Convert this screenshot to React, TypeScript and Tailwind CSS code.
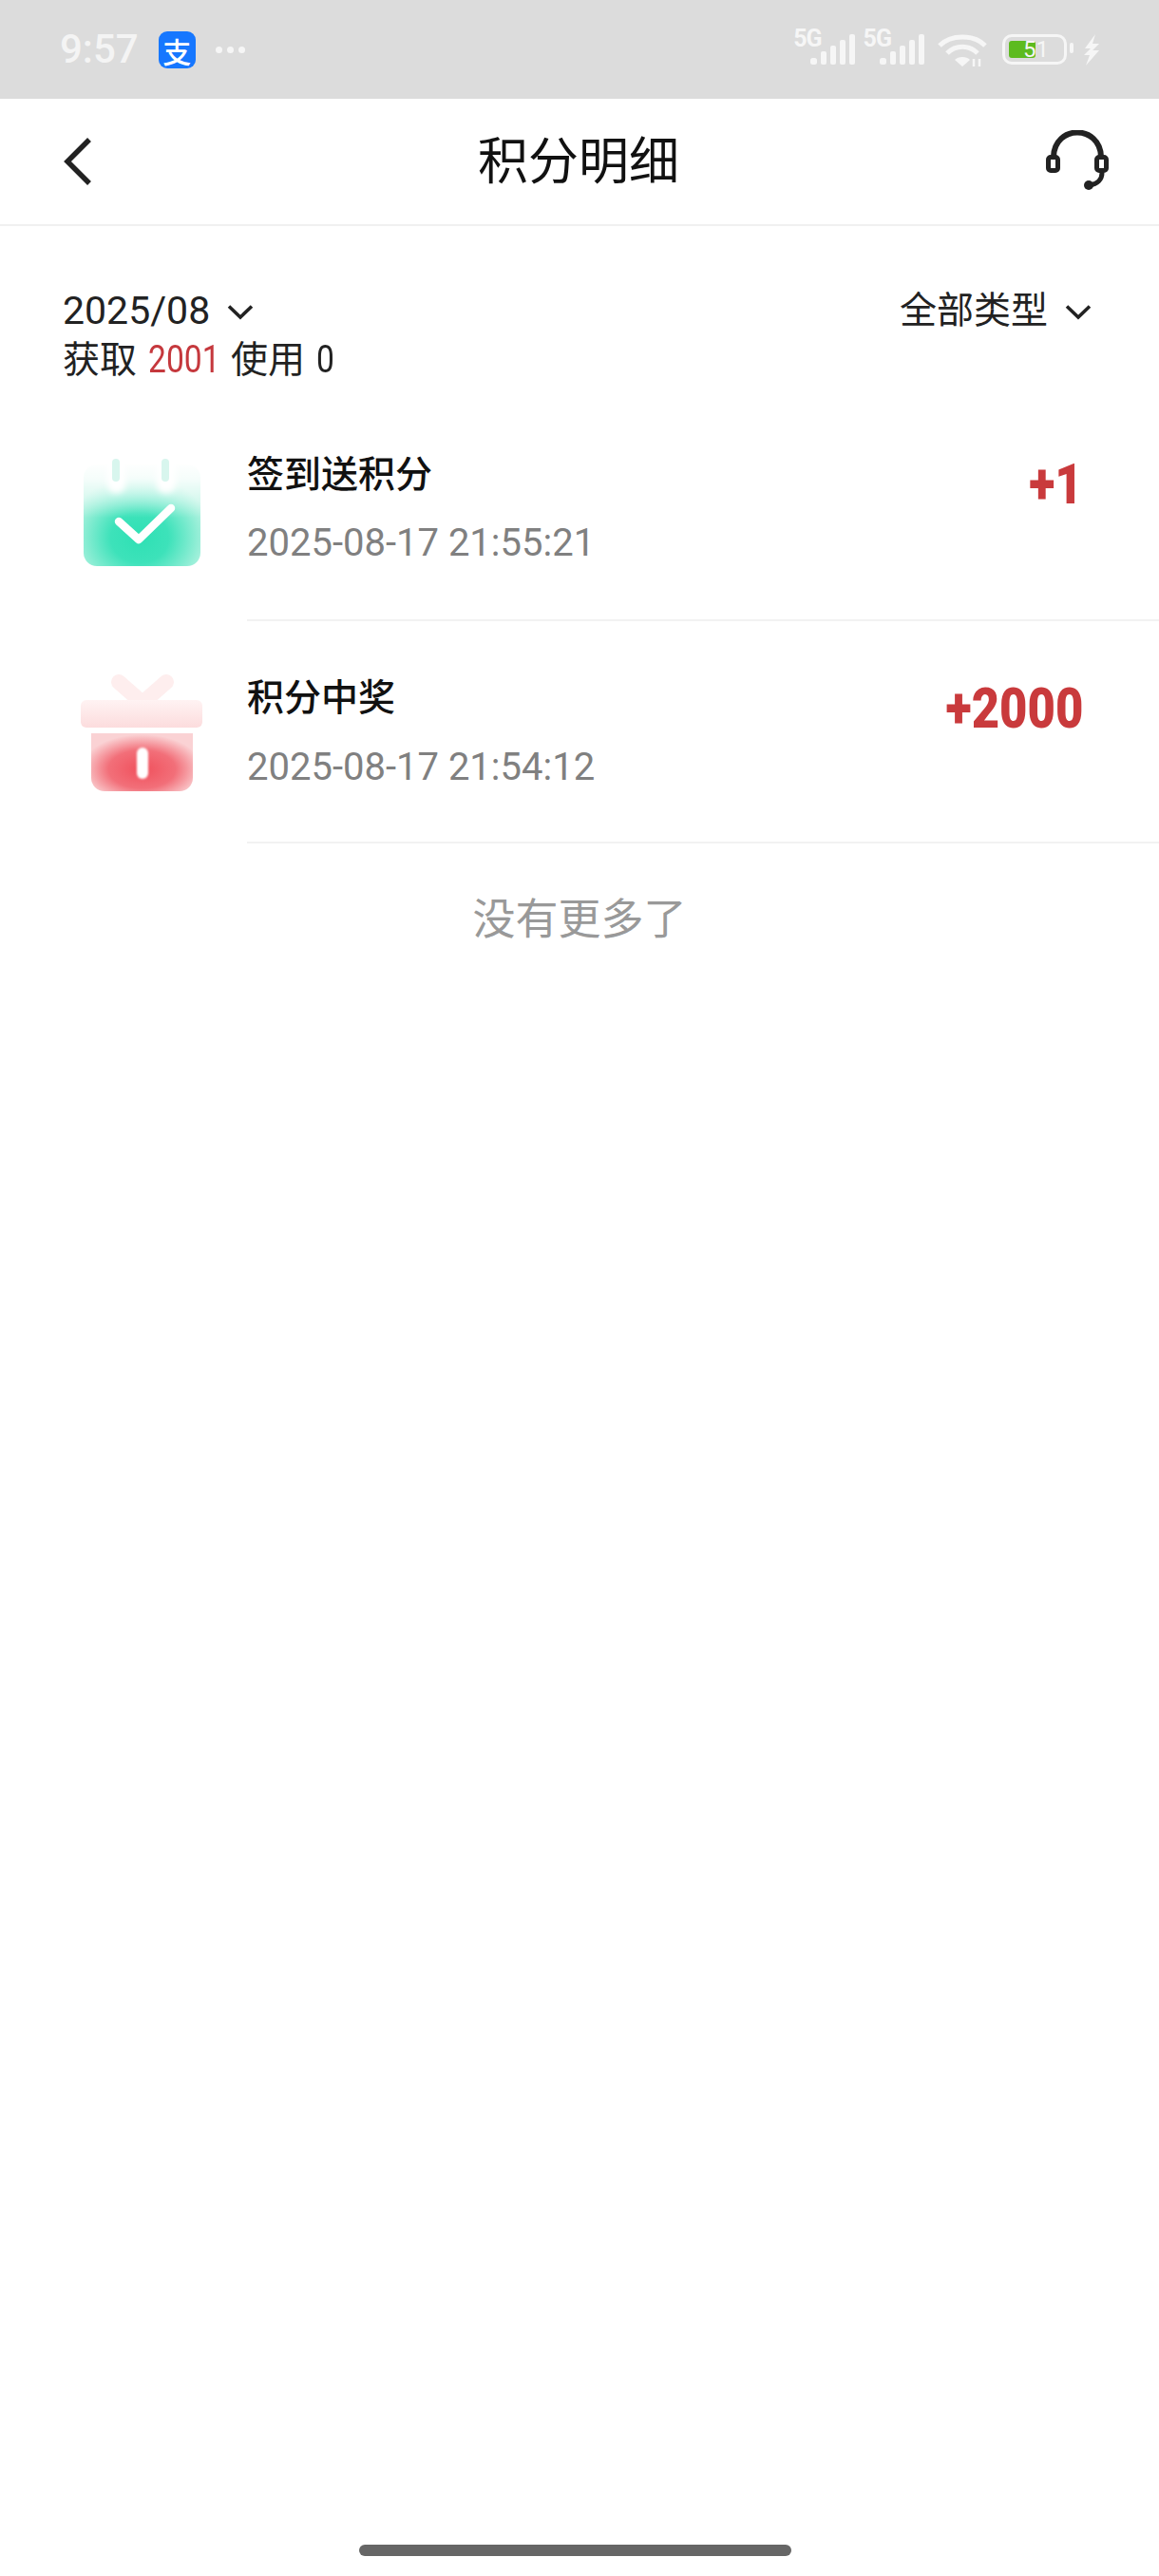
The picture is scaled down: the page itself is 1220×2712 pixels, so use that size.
const FONT = "font-['Roboto','Noto_Sans_CJK_SC',sans-serif]";

function Chevron() {
  return (
    <svg width="28" height="17" viewBox="0 0 28 17" fill="none" className="shrink-0">
      <path d="M2 2.5 14 14 26 2.5" stroke="#222" strokeWidth="3.6" />
    </svg>
  );
}

function Signal() {
  return (
    <div className="flex items-start">
      <span className="text-[25px] leading-[20px] font-bold text-[#f6f6f6] tracking-[-1px] mt-[-2px]">5G</span>
      <svg width="48" height="32" viewBox="0 0 48 32" className="ml-[-12px] mt-[3px]" fill="#f6f6f6">
        <rect x="0" y="25" width="7" height="7" rx="2.5" />
        <rect x="11" y="18" width="6" height="14" rx="2" />
        <rect x="21" y="12" width="6" height="20" rx="2" />
        <rect x="31" y="6" width="6" height="26" rx="2" />
        <rect x="41" y="0" width="6" height="32" rx="2" />
      </svg>
    </div>
  );
}

function StatusBar() {
  return (
    <div className="h-[104px] bg-[#dcdcdc] flex items-start pt-[33px] pl-[63px] pr-[62px]">
      <span className="text-[42px] leading-[38px] font-medium text-[#f4f4f4]">9:57</span>
      <div className="ml-[21px] w-[39px] h-[39px] rounded-[9px] bg-[#1677ff] flex items-center justify-center text-white text-[30px] leading-none font-medium font-['Noto_Sans_CJK_SC',sans-serif]">
        支
      </div>
      <div className="ml-[21px] mt-[16px] flex gap-[5px]">
        <span className="w-[7px] h-[7px] rounded-full bg-[#f6f6f6]" />
        <span className="w-[7px] h-[7px] rounded-full bg-[#f6f6f6]" />
        <span className="w-[7px] h-[7px] rounded-full bg-[#f6f6f6]" />
      </div>

      <div className="ml-auto flex items-start">
        <Signal />
        <div className="ml-[8px]">
          <Signal />
        </div>
        <svg width="52" height="36" viewBox="0 0 52 36" fill="none" className="ml-[13px] mt-[2px]">
          <path d="M2 13C14 1 38 1 50 13" stroke="#f6f6f6" strokeWidth="5" />
          <path d="M10 21C19 12 33 12 42 21" stroke="#f6f6f6" strokeWidth="5" />
          <path d="M18 28C22 24 30 24 34 28L26 35Z" fill="#f6f6f6" />
          <path d="M38 27v8M44 27v8" stroke="#f6f6f6" strokeWidth="2.5" />
        </svg>
        <div className="relative ml-[16px] mt-[3px] w-[68px] h-[32px] rounded-[10px] border-[3px] border-[#f6f6f6] p-[4px]">
          <div className="w-[28px] h-full rounded-[3px] bg-[#5dbb1f]" />
          <span className="absolute left-[19px] top-[1px] text-[24px] leading-[24px] text-[#f6f6f6]">51</span>
        </div>
        <div className="ml-[3px] mt-[12px] w-[4px] h-[11px] rounded-[2px] bg-[#f6f6f6]" />
        <svg width="18" height="33" viewBox="0 0 18 33" className="ml-[10px] mt-[3px]" fill="#f6f6f6">
          <path d="M13 0 2 15 8 15 1 22 7 22 3 33 17 17 10 17 17 10 10 10Z" />
        </svg>
      </div>
    </div>
  );
}

function NavBar() {
  return (
    <div className="relative h-[134px] border-b-2 border-[#f0f0f0] flex items-center justify-between pl-[66px] pr-[52px]">
      <svg width="30" height="52" viewBox="0 0 30 52" fill="none">
        <path d="M28 3 5 26 28 49" stroke="#222" strokeWidth="5.5" />
      </svg>
      <span className="absolute left-0 right-[2px] mt-[2px] text-center text-[53px] leading-[60px] text-[#111]">积分明细</span>
      <svg width="68" height="64" viewBox="0 0 68 64" fill="none" className="mt-[-3px]">
        <path d="M9 28C10 -6 58 -6 59 28" stroke="#222" strokeWidth="6" />
        <rect x="3.5" y="28.5" width="10" height="14" rx="2.5" stroke="#222" strokeWidth="5" fill="#fff" />
        <rect x="54.5" y="28.5" width="10" height="14" rx="2.5" stroke="#222" strokeWidth="5" fill="#fff" />
        <path d="M60 45C60 52 55 57 47 58" stroke="#222" strokeWidth="5" />
        <circle cx="46" cy="58" r="5" fill="#222" />
      </svg>
    </div>
  );
}

function CalendarIcon() {
  return (
    <svg width="130" height="116" viewBox="0 0 130 116" className="shrink-0">
      <defs>
        <radialGradient id="cal" cx="48%" cy="72%" r="62%">
          <stop offset="0%" stopColor="#2ee0b4" />
          <stop offset="40%" stopColor="#3de2ba" />
          <stop offset="100%" stopColor="#bdf4e4" />
        </radialGradient>
        <linearGradient id="calFade" x1="0" y1="0" x2="0" y2="1">
          <stop offset="0%" stopColor="#fff" stopOpacity="1" />
          <stop offset="30%" stopColor="#fff" stopOpacity="0.85" />
          <stop offset="100%" stopColor="#fff" stopOpacity="0" />
        </linearGradient>
        <filter id="soft" x="-40%" y="-40%" width="180%" height="180%">
          <feGaussianBlur stdDeviation="3" />
        </filter>
      </defs>
      <rect x="3" y="8" width="123" height="107" rx="14" fill="url(#cal)" />
      <rect x="2" y="6" width="125" height="58" fill="url(#calFade)" />
      <rect x="28" y="-6" width="19" height="44" rx="9" fill="#fff" filter="url(#soft)" />
      <rect x="80" y="-6" width="20" height="44" rx="9" fill="#fff" filter="url(#soft)" />
      <rect x="33" y="2" width="8" height="24" rx="4" fill="#d8f6ee" />
      <rect x="85" y="2" width="8" height="24" rx="4" fill="#d8f6ee" />
      <path d="M40 68 61 87 95 54" fill="none" stroke="#fff" strokeWidth="8.5" strokeLinecap="round" strokeLinejoin="round" />
    </svg>
  );
}

function GiftIcon() {
  return (
    <svg width="130" height="124" viewBox="0 0 130 124" className="shrink-0">
      <defs>
        <linearGradient id="lid" x1="0" y1="0" x2="0" y2="1">
          <stop offset="0%" stopColor="#fff3f3" />
          <stop offset="100%" stopColor="#fcdcdd" />
        </linearGradient>
        <radialGradient id="box" cx="50%" cy="62%" r="60%">
          <stop offset="0%" stopColor="#f0505c" />
          <stop offset="55%" stopColor="#f26f79" />
          <stop offset="100%" stopColor="#fad2d4" />
        </radialGradient>
        <filter id="slot" x="-60%" y="-20%" width="220%" height="140%">
          <feGaussianBlur stdDeviation="1" />
        </filter>
      </defs>
      <path d="M40 8 65 30 90 8" fill="none" stroke="#feeeee" strokeWidth="16" strokeLinecap="round" />
      <rect x="0" y="27" width="128" height="29" rx="6" fill="url(#lid)" />
      <path d="M11 62h107v47a14 14 0 0 1-14 14H25a14 14 0 0 1-14-14Z" fill="url(#box)" />
      <rect x="59" y="77" width="12" height="33" rx="6" fill="#fff" filter="url(#slot)" />
    </svg>
  );
}

function Amount({ value }: { value: string }) {
  return (
    <span className="block origin-right scale-x-[0.86] text-[59px] leading-[60px] font-black text-[#c93a3c]">
      {value}
    </span>
  );
}

type RowProps = {
  icon: React.ReactNode;
  iconClass: string;
  titleClass: string;
  timeClass: string;
  amountClass: string;
  title: string;
  time: string;
  amount: string;
};

function Row({ icon, iconClass, titleClass, timeClass, amountClass, title, time, amount }: RowProps) {
  return (
    <div className="flex items-start">
      <div className={`w-[260px] pl-[85px] shrink-0 ${iconClass}`}>{icon}</div>
      <div className="flex-1 h-[234px] border-b-2 border-[#f2f2f2] pr-[80px] flex justify-between">
        <div>
          <div className={`text-[39px] leading-[46px] font-medium text-[#111] ${titleClass}`}>{title}</div>
          <div className={`text-[40px] leading-[48px] text-[#808080] ${timeClass}`}>{time}</div>
        </div>
        <div className={amountClass}>
          <Amount value={amount} />
        </div>
      </div>
    </div>
  );
}

export default function App() {
  return (
    <div className={`relative w-[1220px] h-[2712px] bg-white overflow-hidden ${FONT}`}>
      <StatusBar />
      <NavBar />

      <div className="pl-[66px] pr-[71px] pt-[64px] flex justify-between items-start">
        <div>
          <div className="flex items-center h-[50px] text-[41px] leading-[50px] text-[#222]">
            2025/08
            <span className="ml-[18px] mt-[3px]">
              <Chevron />
            </span>
          </div>
          <div className="mt-[3px] flex items-center h-[48px] text-[39px] leading-[48px] text-[#222]">
            <span>获取</span>
            <span className="ml-[12px] w-[73px] origin-left scale-x-[0.84] text-[40px] text-[#c5383d]">2001</span>
            <span className="ml-[14px]">使用</span>
            <span className="ml-[12px] origin-left scale-x-[0.84] text-[40px]">0</span>
          </div>
        </div>
        <div className="flex items-center h-[50px] text-[39px] leading-[50px] text-[#222]">
          全部类型
          <span className="ml-[18px] mt-[3px]">
            <Chevron />
          </span>
        </div>
      </div>

      <div className="mt-[17px]">
        <Row
          icon={<CalendarIcon />}
          iconClass="pt-[61px]"
          titleClass="pt-[57px]"
          timeClass="mt-[25px]"
          amountClass="pt-[60px]"
          title="签到送积分"
          time="2025-08-17 21:55:21"
          amount="+1"
        />
        <Row
          icon={<GiftIcon />}
          iconClass="pt-[56px]"
          titleClass="pt-[58px]"
          timeClass="mt-[26px]"
          amountClass="pt-[62px]"
          title="积分中奖"
          time="2025-08-17 21:54:12"
          amount="+2000"
        />
      </div>

      <div className="mt-[51px] text-center text-[45px] leading-[60px] text-[#999]">没有更多了</div>

      <div className="absolute left-[378px] top-[2679px] w-[455px] h-[12px] rounded-full bg-[#666]" />
    </div>
  );
}
